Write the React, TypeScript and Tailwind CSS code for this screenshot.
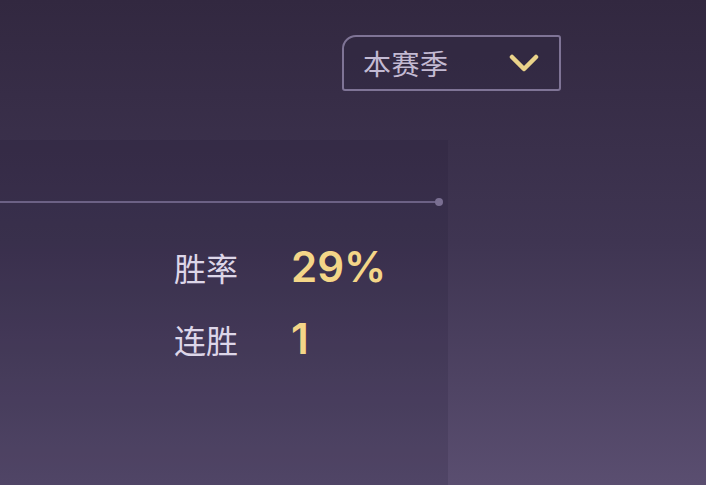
const stats = [
  { label: "胜率", value: "29%" },
  { label: "连胜", value: "1" },
];

export default function App() {
  return (
    <div
      className="w-[706px] h-[485px] overflow-hidden flex flex-col bg-gradient-to-b from-[#322840] via-[#3f3552] to-[#5a4e70]"
      style={{ fontFamily: '"Noto Sans CJK SC", "Noto Sans", sans-serif' }}
    >
      {/* 赛季选择 */}
      <div className="h-[140px] pt-[35px] pl-[342px]">
        <button className="w-[219px] h-[56px] flex items-center justify-between pl-[19px] pr-[20px] border-2 border-[#7f7496] rounded-tl-[14px] rounded-tr-[3px] rounded-br-[3px] rounded-bl-[3px] bg-[#2f2740]/40">
          <span className="text-[28px] leading-none text-[#c3bad3] tracking-[0.5px]">本赛季</span>
          <svg width="30" height="19" viewBox="0 0 30 19" fill="none">
            <polyline
              points="3,3 15,15 27,3"
              stroke="#ead38a"
              strokeWidth="4.5"
              strokeLinecap="round"
              strokeLinejoin="round"
            />
          </svg>
        </button>
      </div>

      {/* 数据面板 */}
      <div className="flex-1 w-[448px] bg-[#1e1530]/15 pt-[58px]">
        <div className="flex items-center w-[443px]">
          <div className="flex-1 h-[2px] bg-[#6c6185]" />
          <div className="w-[8px] h-[8px] rounded-full bg-[#7a6f92] -ml-[3px]" />
        </div>

        <div className="pl-[174px] pt-[42px] flex flex-col gap-[34px]">
          {stats.map((s) => (
            <div key={s.label} className="flex items-center h-[38px]">
              <span className="w-[117px] text-[32px] leading-none text-[#ddd6e8]">{s.label}</span>
              <span
                className="text-[42px] leading-none font-semibold text-[#f4d688]"
                style={{ fontFamily: "Inter, sans-serif" }}
              >
                {s.value}
              </span>
            </div>
          ))}
        </div>
      </div>
    </div>
  );
}
